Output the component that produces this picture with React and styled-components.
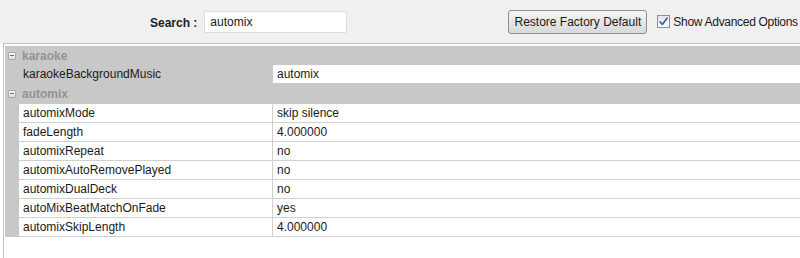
import React from "react";
import styled, { createGlobalStyle } from "styled-components";

const GlobalStyle = createGlobalStyle`
  html, body {
    margin: 0;
    padding: 0;
    background: #ffffff;
    font-family: "Liberation Sans", Arial, sans-serif;
    font-size: 12px;
    color: #1a1a1a;
  }
`;

const GROUPS = [
  {
    name: "karaoke",
    shaded: true,
    rows: [ { key: "karaokeBackgroundMusic", value: "automix" } ],
  },
  {
    name: "automix",
    tall: true,
    rows: [
      { key: "automixMode", value: "skip silence" },
      { key: "fadeLength", value: "4.000000" },
      { key: "automixRepeat", value: "no" },
      { key: "automixAutoRemovePlayed", value: "no" },
      { key: "automixDualDeck", value: "no" },
      { key: "autoMixBeatMatchOnFade", value: "yes" },
      { key: "automixSkipLength", value: "4.000000" },
    ],
  },
];

const CheckIcon = () => (
  <svg width="11" height="11" viewBox="0 0 11 11">
    <path d="M2 5.8 L4.3 8.4 L9 2.2" fill="none" stroke="#3a5fb0" strokeWidth="1.7"
          strokeLinecap="round" strokeLinejoin="round"/>
  </svg>
);

export default function App(){
  return ( <Page>
    <GlobalStyle/>
    <Toolbar>
      <SearchLabel>Search :</SearchLabel>
      <SearchInput defaultValue={ "automix" }/>
      <RestoreButton>Restore Factory Default</RestoreButton>
      <CheckLabel>
        <CheckBox><CheckIcon/></CheckBox>
        Show Advanced Options
      </CheckLabel>
    </Toolbar>
    <Grid>
      { GROUPS.map( group => (
        <Group key={ group.name }>
          <GroupHeader tall={ group.tall }>
            <Collapse/>
            <GroupName>{ group.name }</GroupName>
          </GroupHeader>
          { group.rows.map( row => (
            <Row key={ row.key } shaded={ group.shaded }>
              <KeyCell shaded={ group.shaded }>{ row.key }</KeyCell>
              <ValueCell>{ row.value }</ValueCell>
            </Row>
          ) ) }
        </Group>
      ) ) }
      <Filler/>
    </Grid>
  </Page> );
}

const Page = styled.div`
  width: 800px;
  height: 258px;
  overflow: hidden;
  display: flex;
  flex-direction: column;
`;

const Toolbar = styled.div`
  flex-shrink: 0;
  height: 43px;
  background: #f0f0f0;
  display: flex;
  align-items: center;
  padding-left: 150px;
  white-space: nowrap;
  & > * {
    flex-shrink: 0;
  }
`;

const SearchLabel = styled.span`
  font-weight: bold;
  color: #202020;
  margin-right: 7px;
  margin-top: 2px;
`;

const SearchInput = styled.input`
  box-sizing: border-box;
  width: 143px;
  height: 22px;
  border: 1px solid #dcdcdc;
  border-radius: 2px;
  background: #fff;
  font: 12px "Liberation Sans", Arial, sans-serif;
  color: #1a1a1a;
  padding: 0 5px;
  outline: none;
`;

const RestoreButton = styled.button`
  box-sizing: border-box;
  margin-left: 161px;
  width: 139px;
  height: 24px;
  border: 1px solid #8e8e8e;
  border-radius: 3px;
  background: linear-gradient(#f6f6f6, #e4e4e4 55%, #d9d9d9);
  font: 12px "Liberation Sans", Arial, sans-serif;
  color: #1a1a1a;
  padding: 0;
`;

const CheckLabel = styled.span`
  display: flex;
  align-items: center;
  margin-left: 10px;
  color: #1a1a1a;
  letter-spacing: -0.3px;
`;

const CheckBox = styled.span`
  box-sizing: border-box;
  width: 13px;
  height: 13px;
  margin-right: 3px;
  border: 1px solid #8f8f8f;
  background: linear-gradient(#e6e6e6, #fafafa);
  display: flex;
  align-items: center;
  justify-content: center;
`;

const Grid = styled.div`
  flex: 1;
  margin-left: 3px;
  border-left: 1px solid #c4c4c4;
  border-top: 1px solid #c4c4c4;
  padding: 2px 0 0 1px;
  background: #fff;
  display: flex;
  flex-direction: column;
`;

const Group = styled.div`
  flex-shrink: 0;
  background: #c8c8c8;
  display: flex;
  flex-direction: column;
`;

const GroupHeader = styled.div`
  height: ${ p => p.tall ? 20 : 19 }px;
  display: flex;
  align-items: center;
  padding-left: 3px;
`;

const Collapse = styled.span`
  position: relative;
  box-sizing: border-box;
  width: 8px;
  height: 8px;
  border: 1px solid #a8a8a8;
  border-radius: 1px;
  background: linear-gradient(#fbfbfb, #dedede);
  margin-right: 6px;
  &::after {
    content: "";
    position: absolute;
    left: 1px;
    right: 1px;
    top: 2px;
    height: 1px;
    background: #5a6d8a;
  }
`;

const GroupName = styled.span`
  font-weight: bold;
  color: #939393;
`;

const Row = styled.div`
  display: flex;
  margin-left: 14px;
  height: 19px;
  box-sizing: border-box;
  border-bottom: 1px solid ${ p => p.shaded ? "#c8c8c8" : "#d0d0d0" };
  background: ${ p => p.shaded ? "#c8c8c8" : "#ffffff" };
`;

const KeyCell = styled.div`
  width: 254px;
  box-sizing: border-box;
  padding-left: 4px;
  line-height: 19px;
  border-right: 1px solid ${ p => p.shaded ? "#c8c8c8" : "#d0d0d0" };
  color: #1a1a1a;
`;

const ValueCell = styled.div`
  flex: 1;
  padding-left: 4px;
  line-height: 19px;
  background: #fff;
  color: #1a1a1a;
`;

const Filler = styled.div`
  flex: 1;
  background: #fff;
`;
